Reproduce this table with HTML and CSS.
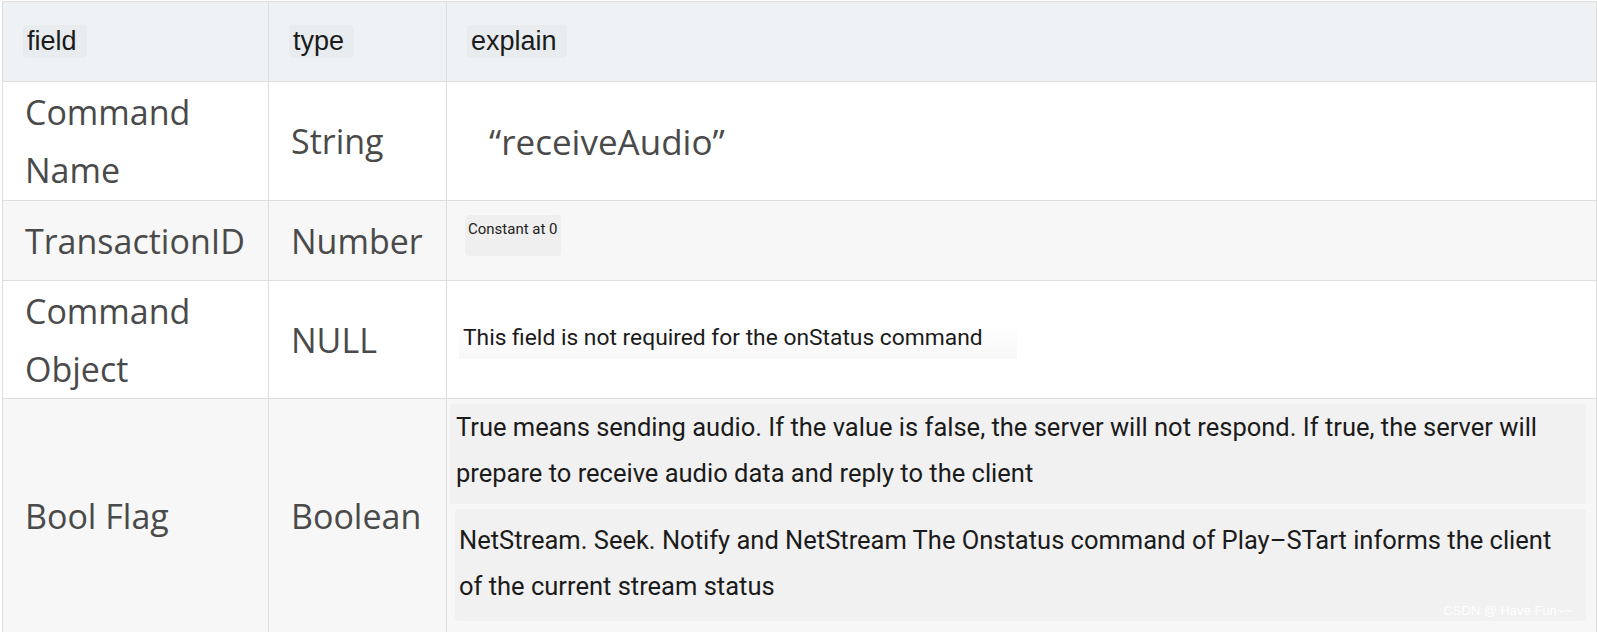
FILE: index.html
```html
<!DOCTYPE html>
<html>
<head>
<meta charset="utf-8">
<link rel="stylesheet" href="styles.css">
</head>
<body>
<table class="grid">
  <colgroup>
    <col class="c1"><col class="c2"><col class="c3">
  </colgroup>
  <thead>
    <tr class="head">
      <th><span class="chip">field</span></th>
      <th><span class="chip">type</span></th>
      <th><span class="chip">explain</span></th>
    </tr>
  </thead>
  <tbody>
    <tr class="r1">
      <td class="big">Command<br>Name</td>
      <td class="big">String</td>
      <td class="quote">“receiveAudio”</td>
    </tr>
    <tr class="r2 alt">
      <td class="big">TransactionID</td>
      <td class="big">Number</td>
      <td class="top"><div class="small-box">Constant at 0</div></td>
    </tr>
    <tr class="r3">
      <td class="big">Command<br>Object</td>
      <td class="big">NULL</td>
      <td class="plain"><div class="desc">This field is not required for the onStatus command</div></td>
    </tr>
    <tr class="r4 alt">
      <td class="big">Bool Flag</td>
      <td class="big">Boolean</td>
      <td class="stack">
        <div class="para p1">True means sending audio. If the value is false, the server will not respond. If true, the server will prepare to receive audio data and reply to the client</div>
        <div class="para p2">NetStream. Seek. Notify and NetStream The Onstatus command of Play–STart informs the client of the current stream status</div>
        <span class="mark">CSDN @ Have Fun~~</span>
      </td>
    </tr>
  </tbody>
</table>
</body>
</html>
```
FILE: styles.css
```css
html, body {
  margin: 0;
  padding: 0;
  background: #ffffff;
  overflow: hidden;
}
.grid {
  margin: 1px 0 0 2px;
  width: 1594px;
  border-collapse: collapse;
  table-layout: fixed;
}
.c1 { width: 266px; }
.c2 { width: 178px; }
.c3 { width: 1150px; }
.grid th, .grid td {
  border: 1px solid #dedede;
  padding: 0 0 0 22px;
  vertical-align: middle;
  text-align: left;
}
.head th {
  background: #eef2f5;
  height: 79px;
  font-family: "Liberation Sans", Arial, sans-serif;
  font-weight: normal;
  font-size: 27px;
  color: #1b1b1b;
  padding-left: 20px;
}
.chip {
  display: inline-block;
  background: #e8ecef;
  border-radius: 4px;
  padding: 3px 10px 4px 4px;
  line-height: 26px;
}
.alt td { background: #f7f7f7; }
.big {
  font-family: "Open Sans", sans-serif;
  font-size: 34px;
  line-height: 58px;
  color: #4a4a4a;
}
.r1 td { height: 118px; }
.r2 td { height: 79px; }
.r3 td { height: 117px; }
.r4 td { height: 233px; }
.quote {
  font-family: "Open Sans", sans-serif;
  font-size: 35px;
  color: #4a4a4a;
  padding-left: 42px !important;
}
.r2 .top {
  vertical-align: top;
  padding-top: 14px;
  padding-left: 18px;
  height: 65px;
}
.small-box {
  display: inline-block;
  vertical-align: top;
  width: 93px;
  height: 41px;
  padding-left: 3px;
  background: #efefef;
  border-radius: 4px;
  font-family: Roboto, sans-serif;
  font-size: 15px;
  line-height: 29px;
  color: #222;
}
.r3 .plain { padding-left: 12px; }
.desc {
  display: inline-block;
  width: 554px;
  padding: 0 0 4px 4px;
  background: linear-gradient(#ffffff, #f8f8f8);
  font-family: Roboto, sans-serif;
  font-size: 22.8px;
  line-height: 34px;
  color: #1b1b1b;
}
.r4 .stack {
  position: relative;
  padding: 5px 10px 10px 3px;
  vertical-align: top;
  height: 218px;
}
.para {
  font-family: Roboto, sans-serif;
  font-size: 25.5px;
  line-height: 46px;
  color: #1b1b1b;
  background: #f1f1f1;
  border-radius: 3px;
}
.p1 {
  height: 100px;
  padding: 0 40px 0 6px;
}
.p2 {
  margin: 5px 0 0 5px;
  height: 112px;
  padding: 8px 20px 0 4px;
  box-sizing: border-box;
}
.mark {
  position: absolute;
  right: 24px;
  top: 205px;
  font-family: "Liberation Sans", Arial, sans-serif;
  font-size: 13px;
  line-height: 14px;
  color: #ffffff;
}
```
